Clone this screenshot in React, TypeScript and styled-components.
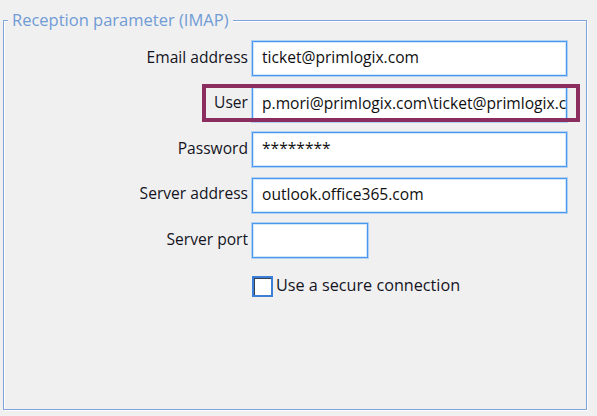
import React from "react";
import styled, { createGlobalStyle } from "styled-components";

const GlobalStyle = createGlobalStyle`
  html, body {
    margin: 0;
    padding: 0;
    background: #f0f0f0;
  }
  body {
    font-family: "Open Sans", "Noto Sans", sans-serif;
    color: #111111;
  }
`;

interface Field {
  label: string;
  value: string;
  short?: boolean;
  highlight?: boolean;
}

const fields: Field[] = [
  { label: "Email address", value: "ticket@primlogix.com" },
  {
    label: "User",
    value: "p.mori@primlogix.com\\ticket@primlogix.com",
    highlight: true,
  },
  { label: "Password", value: "********" },
  { label: "Server address", value: "outlook.office365.com" },
  { label: "Server port", value: "", short: true },
];

const App: React.FC = () => {
  return (
    <>
      <GlobalStyle />
      <StyledPage>
        <StyledGroup>
          <StyledLegend>Reception parameter (IMAP)</StyledLegend>
          <StyledForm>
            {fields.map((field) => (
              <StyledRow key={field.label}>
                <StyledLabel>{field.label}</StyledLabel>
                <StyledInput $short={field.short}>
                  <StyledValue>{field.value}</StyledValue>
                </StyledInput>
                {field.highlight && <StyledHighlight />}
              </StyledRow>
            ))}
            <StyledCheckRow>
              <StyledCheckbox />
              <StyledCheckText>Use a secure connection</StyledCheckText>
            </StyledCheckRow>
          </StyledForm>
        </StyledGroup>
      </StyledPage>
    </>
  );
};

export default App;

const StyledPage = styled.div`
  width: 597px;
  height: 416px;
  padding: 10px 10px 0 3px;
  box-sizing: border-box;
`;

const StyledGroup = styled.fieldset`
  margin: 0;
  padding: 0;
  width: 584px;
  height: 400px;
  box-sizing: border-box;
  border: 1px solid #7ea4db;
  box-shadow: inset 1px 1px 0 #ffffff, 1px 1px 0 #ffffff;
  min-width: 0;
`;

const StyledLegend = styled.legend`
  margin-left: 4px;
  padding: 0 4px;
  background: #f0f0f0;
  color: #6f9bd6;
  font-size: 16.5px;
  line-height: 20px;
  height: 20px;
`;

const StyledForm = styled.div`
  display: flex;
  flex-direction: column;
  gap: 10.5px;
  padding-top: 11px;
`;

const StyledRow = styled.div`
  position: relative;
  display: flex;
  align-items: center;
  gap: 4px;
  height: 35px;
`;

const StyledLabel = styled.div`
  width: 244px;
  text-align: right;
  font-size: 15.6px;
  line-height: 20px;
  margin-top: -4px;
  color: #14141f;
`;

const StyledInput = styled.div<{ $short?: boolean }>`
  width: ${({ $short }) => ($short ? "116px" : "315px")};
  height: 35px;
  box-sizing: border-box;
  background: #ffffff;
  border: 1px solid #4a98ee;
  box-shadow: 0 0 0 1px rgba(130, 185, 245, 0.55),
    inset 0 0 0 1px rgba(130, 185, 245, 0.35);
  padding: 0 0 0 9px;
  display: flex;
  align-items: center;
  overflow: hidden;
`;

const StyledValue = styled.span`
  font-size: 15.6px;
  line-height: 20px;
  margin-top: -3px;
  white-space: nowrap;
  color: #0f0f0f;
`;

const StyledHighlight = styled.div`
  position: absolute;
  left: 198px;
  top: -3px;
  width: 378px;
  height: 38px;
  box-sizing: border-box;
  border: 4px solid #8c2d60;
  pointer-events: none;
`;

const StyledCheckRow = styled.div`
  display: flex;
  align-items: center;
  gap: 3px;
  padding-left: 248px;
  margin-top: 7px;
`;

const StyledCheckbox = styled.div`
  width: 21px;
  height: 21px;
  box-sizing: border-box;
  background: #ffffff;
  border: 2px solid #3c7fd4;
  box-shadow: inset 1px 1px 0 #33425a;
`;

const StyledCheckText = styled.span`
  font-size: 16.2px;
  line-height: 20px;
  margin-top: -2px;
  color: #14141f;
`;
